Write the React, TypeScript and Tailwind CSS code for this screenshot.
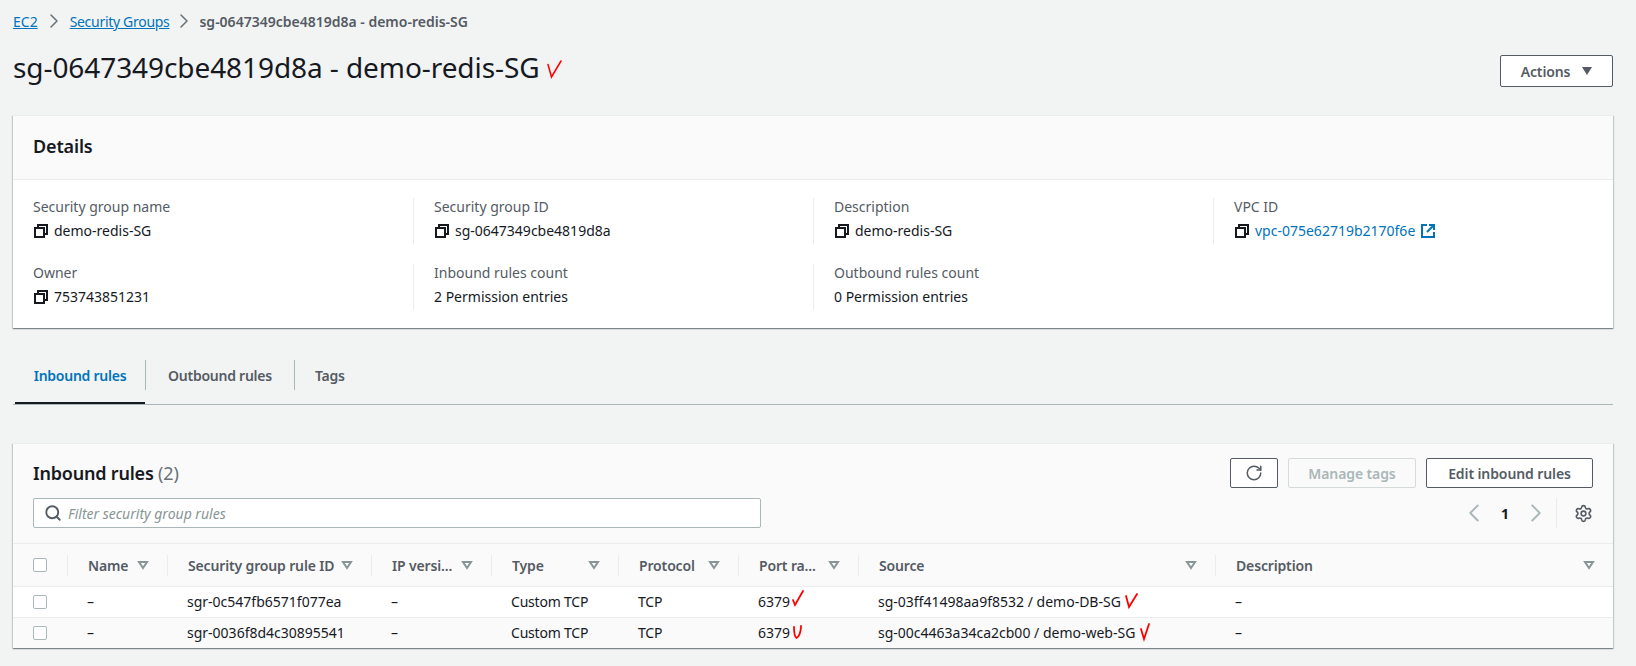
import React from 'react';
import { ChevronLeft, ChevronRight, RotateCw, Search, Settings } from 'lucide-react';

const Copy = () => (
  <svg viewBox="0 0 16 16" className="h-4 w-4 shrink-0" fill="none" stroke="#16191f" strokeWidth="2">
    <rect x="2" y="5" width="9" height="9" />
    <path d="M5 5V2h9v9h-3" />
  </svg>
);

const External = () => (
  <svg viewBox="0 0 16 16" className="h-4 w-4 shrink-0" fill="none" stroke="#0073bb" strokeWidth="2">
    <path d="M7 2H2v12h12V9" />
    <path d="M9 2h5v5M14 2L7 9" />
  </svg>
);

const FilterIcon = () => (
  <svg viewBox="0 0 12 10" className="h-[10px] w-[12px] shrink-0" fill="none" stroke="#879596" strokeWidth="2">
    <path d="M2 2h8L6 8z" />
  </svg>
);

const Check = ({ d, className }: { d: string; className: string }) => (
  <svg viewBox="0 0 16 20" className={className} fill="none" stroke="#f00" strokeWidth="1.8" strokeLinecap="round">
    <path d={d} />
  </svg>
);

const Box = () => <span className="block h-[14px] w-[14px] rounded-[2px] border border-[#aab7b8] bg-white" />;

const Field = ({ label, children, last, first }: { label: string; children: React.ReactNode; last?: boolean; first?: boolean }) => (
  <div className={`h-[46px] ${first ? '' : 'pl-[20px]'} ${last ? '' : 'border-r border-[#eaeded]'}`}>
    <div className="leading-[18px] text-[#545b64]">{label}</div>
    <div className="mt-[6px] flex items-center gap-[5px] leading-[18px] text-[#16191f]">{children}</div>
  </div>
);

const columns = [
  { label: 'Name', w: 'w-[100px]' },
  { label: 'Security group rule ID', w: 'w-[204px]' },
  { label: 'IP versi...', w: 'w-[120px]' },
  { label: 'Type', w: 'w-[127px]' },
  { label: 'Protocol', w: 'w-[120px]' },
  { label: 'Port ra...', w: 'w-[120px]' },
  { label: 'Source', w: 'w-[357px]' },
  { label: 'Description', w: 'flex-1' },
];

const rows = [
  {
    id: 'sgr-0c547fb6571f077ea',
    port: 'M2 10l2 5 8-14',
    portClass: 'ml-[1px] h-5 w-4 -translate-y-[2px]',
    source: 'sg-03ff41498aa9f8532 / demo-DB-SG',
    check: 'M2 4l3 11 8-13',
  },
  {
    id: 'sgr-0036f8d4c30895541',
    port: 'M3 4c0 6 1 10 2.5 11 2.5-1 4.5-6 4.5-12',
    portClass: 'ml-[1px] h-5 w-4',
    source: 'sg-00c4463a34ca2cb00 / demo-web-SG',
    check: 'M3 6l3 10 5-15',
  },
];

function Row({ row, last }: { row: (typeof rows)[number]; last: boolean }) {
  return (
    <div className={`flex h-[30.5px] items-center text-[#16191f] ${last ? 'bg-[#fafafa]' : 'border-b border-[#eaeded] bg-white'}`}>
      <div className="w-[55px] pl-[20px]">
        <Box />
      </div>
      <div className="w-[100px] pl-[19px]">–</div>
      <div className="w-[204px] pl-[19px]">{row.id}</div>
      <div className="w-[120px] pl-[19px]">–</div>
      <div className="w-[127px] pl-[19px] tracking-[-0.2px]">Custom TCP</div>
      <div className="w-[120px] pl-[19px] tracking-[-0.2px]">TCP</div>
      <div className="flex w-[120px] items-center pl-[19px]">
        6379
        <Check d={row.port} className={row.portClass} />
      </div>
      <div className="flex w-[357px] items-center pl-[19px]">
        {row.source}
        <Check d={row.check} className="ml-[3px] h-5 w-4" />
      </div>
      <div className="flex-1 pl-[19px]">–</div>
    </div>
  );
}

export default function App() {
  return (
    <div className="min-h-[666px] bg-[#f2f3f3] pl-[13px] pr-[23px] text-[14px] font-['Noto_Sans','Liberation_Sans',sans-serif] text-[#16191f]">
      <nav className="flex h-[41px] items-center pt-[1px]">
        <a className="text-[#0073bb] underline">EC2</a>
        <ChevronRight className="mx-[4px] h-[24px] w-[24px] text-[#687078]" strokeWidth={1.5} />
        <a className="tracking-[-0.3px] text-[#0073bb] underline">Security Groups</a>
        <ChevronRight className="mx-[3px] h-[24px] w-[24px] text-[#687078]" strokeWidth={1.5} />
        <span className="font-semibold text-[#545b64]">sg-0647349cbe4819d8a - demo-redis-SG</span>
      </nav>

      <header className="flex h-[74px] items-start justify-between pt-[8px]">
        <h1 className="flex items-center text-[28px] font-normal leading-[36px] tracking-[-0.08px]">
          sg-0647349cbe4819d8a - demo-redis-SG
          <svg viewBox="0 0 16 24" className="ml-[6px] h-[24px] w-[16px]" fill="none" stroke="#f00" strokeWidth="1.5" strokeLinecap="round">
            <path d="M2 9.5L5.5 22L15 6" />
          </svg>
        </h1>
        <button className="mt-[6px] flex h-[32px] w-[113px] items-center justify-center gap-[12px] rounded-[2px] border border-[#545b64] bg-white font-semibold tracking-[-0.15px] text-[#545b64]">
          Actions
          <span className="h-0 w-0 border-x-[5.5px] border-t-[8px] border-x-transparent border-t-[#545b64]" />
        </button>
      </header>

      <section className="border-t border-[#eaeded] bg-white shadow-[0_1px_1px_0_rgba(0,28,36,0.3),1px_1px_1px_0_rgba(0,28,36,0.15),-1px_1px_1px_0_rgba(0,28,36,0.15)]">
        <div className="flex h-[64px] items-center border-b border-[#eaeded] bg-[#fafafa] px-[20px] pb-[2px] text-[18px] font-semibold tracking-[-0.15px]">Details</div>
        <div className="px-[20px] pb-[18px] pt-[18px]">
          <div className="grid grid-cols-[381px_400px_400px_1fr] gap-y-[20px]">
            <Field label="Security group name" first>
              <Copy />
              demo-redis-SG
            </Field>
            <Field label="Security group ID">
              <Copy />
              sg-0647349cbe4819d8a
            </Field>
            <Field label="Description">
              <Copy />
              demo-redis-SG
            </Field>
            <Field label="VPC ID" last>
              <Copy />
              <a className="text-[#0073bb]">vpc-075e62719b2170f6e</a>
              <External />
            </Field>
            <Field label="Owner" first>
              <Copy />
              753743851231
            </Field>
            <Field label="Inbound rules count">2 Permission entries</Field>
            <Field label="Outbound rules count" last>
              0 Permission entries
            </Field>
          </div>
        </div>
      </section>

      <div className="mt-[28px] flex h-[49px] items-center border-b border-[#aab7b8] font-semibold tracking-[-0.25px] text-[#545b64]">
        <div className="ml-[2px] flex h-full w-[130px] items-center justify-center border-b-2 border-[#16191f] pb-[8px] text-[#0073bb]">Inbound rules</div>
        <div className="mb-[10px] h-[30px] border-l border-[#aab7b8]" />
        <div className="mb-[10px] px-[22px]">Outbound rules</div>
        <div className="mb-[10px] h-[30px] border-l border-[#aab7b8]" />
        <div className="mb-[10px] px-[20px]">Tags</div>
      </div>

      <section className="mt-[38px] border-t border-[#eaeded] bg-white shadow-[0_1px_1px_0_rgba(0,28,36,0.3),1px_1px_1px_0_rgba(0,28,36,0.15),-1px_1px_1px_0_rgba(0,28,36,0.15)]">
        <div className="h-[100px] border-b border-[#eaeded] bg-[#fafafa] px-[20px] pt-[14px]">
          <div className="flex h-[30px] items-center justify-between">
            <h2 className="text-[18px] font-semibold leading-[30px] tracking-[-0.2px]">
              Inbound rules <span className="font-normal text-[#687078]">(2)</span>
            </h2>
            <div className="flex gap-[10px] font-semibold tracking-[-0.1px]">
              <button className="flex h-[30px] w-[48px] items-center justify-center rounded-[2px] border border-[#545b64] bg-white text-[#545b64]">
                <RotateCw className="h-[18px] w-[18px]" strokeWidth={2} />
              </button>
              <button className="h-[30px] w-[128px] rounded-[2px] border border-[#d5dbdb] text-[#aab7b8]">Manage tags</button>
              <button className="h-[30px] w-[167px] rounded-[2px] border border-[#545b64] bg-white text-[#545b64]">Edit inbound rules</button>
            </div>
          </div>
          <div className="mt-[10px] flex h-[30px] items-center justify-between">
            <div className="flex h-[30px] w-[728px] items-center rounded-[2px] border border-[#aab7b8] bg-white pl-[10px]">
              <Search className="h-[18px] w-[18px] text-[#545b64]" strokeWidth={2.5} />
              <span className="ml-[6px] italic text-[#879596]">Filter security group rules</span>
            </div>
            <div className="flex items-center">
              <ChevronLeft className="h-[30px] w-[30px] text-[#aab7b8]" strokeWidth={1.5} />
              <span className="mx-[12px] font-bold">1</span>
              <ChevronRight className="h-[30px] w-[30px] text-[#aab7b8]" strokeWidth={1.5} />
              <div className="ml-[5px] h-[30px] border-l border-[#eaeded]" />
              <Settings className="ml-[17px] h-[19px] w-[19px] text-[#545b64]" strokeWidth={2} />
            </div>
          </div>
        </div>

        <div className="flex h-[43px] items-center border-b border-[#eaeded] bg-[#fafafa] font-semibold tracking-[-0.15px] text-[#545b64]">
          <div className="flex h-[21px] w-[55px] items-center border-r border-[#eaeded] pl-[20px]">
            <Box />
          </div>
          {columns.map(col => (
            <div key={col.label} className={`${col.w} flex h-[21px] items-center justify-between pl-[20px] pr-[18px] ${col.label === 'Description' ? '' : 'border-r border-[#eaeded]'}`}>
              <span className="truncate">{col.label}</span>
              <FilterIcon />
            </div>
          ))}
        </div>

        {rows.map((row, i) => (
          <Row key={row.id} row={row} last={i === rows.length - 1} />
        ))}
      </section>
    </div>
  );
}
